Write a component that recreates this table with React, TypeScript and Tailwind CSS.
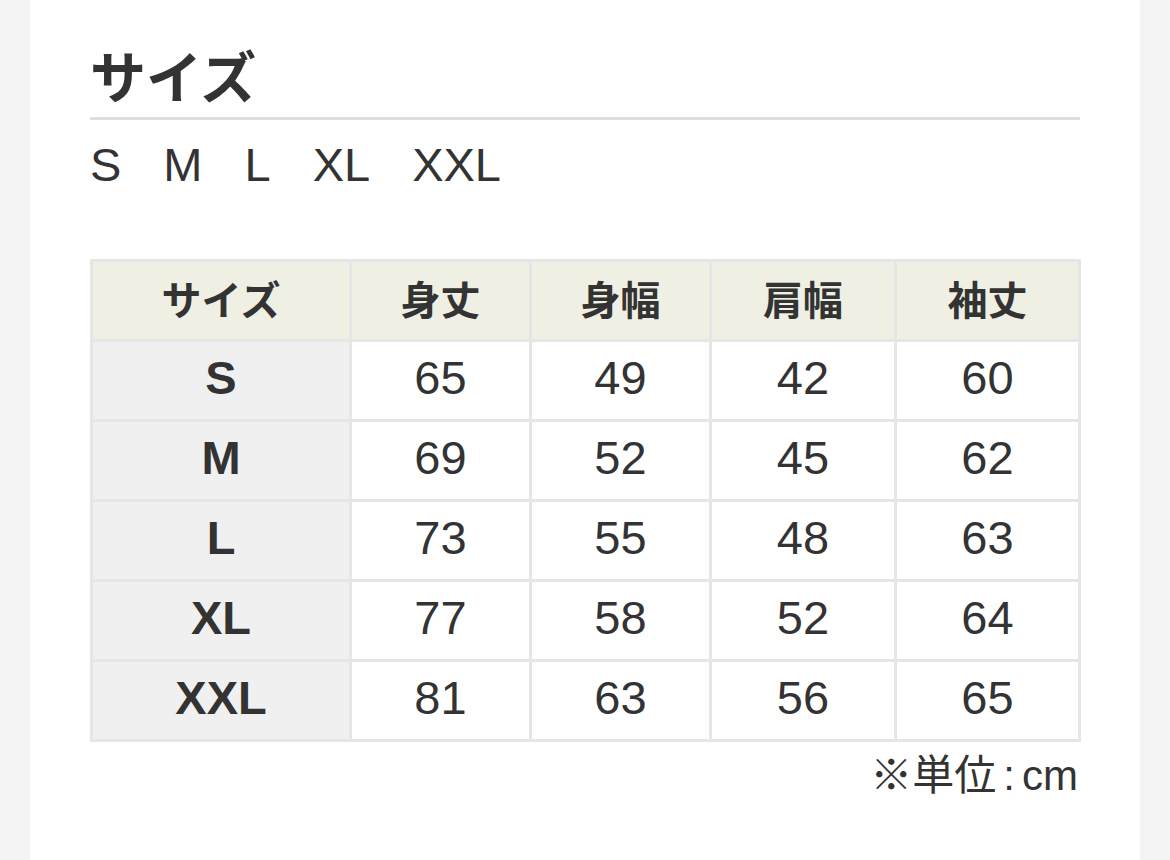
const rows = [
  ["S", "65", "49", "42", "60"],
  ["M", "69", "52", "45", "62"],
  ["L", "73", "55", "48", "63"],
  ["XL", "77", "58", "52", "64"],
  ["XXL", "81", "63", "56", "65"],
];

const heads = ["サイズ", "身丈", "身幅", "肩幅", "袖丈"];
const widths = ["w-[259px]", "w-[180px]", "w-[180px]", "w-[185px]", "w-[184px]"];

export default function App() {
  return (
    <div className="min-h-[860px] bg-[#f4f4f4] px-[30px] font-['Liberation_Sans','Noto_Sans_CJK_JP',sans-serif] text-[#333]">
      <div className="min-h-[860px] w-[1110px] bg-white px-[60px] pt-[44px]">
        <h2 className="border-b-[3px] border-[#dedede] pb-[3px] text-[56px] font-bold leading-[70px]">サイズ</h2>
        <div className="mt-[17px] flex gap-[42px] text-[47px] leading-[56px]">
          <span>S</span>
          <span>M</span>
          <span>L</span>
          <span>XL</span>
          <span>XXL</span>
        </div>
        <table className="mt-[66px] w-[988px] table-fixed border-collapse text-center">
          <thead>
            <tr className="h-[80px] bg-[#efefe3]">
              {heads.map((h, i) => (
                <th key={h} className={`${widths[i]} border-[3px] border-[#e6e6e6] text-[40px] font-bold`}>
                  {h}
                </th>
              ))}
            </tr>
          </thead>
          <tbody>
            {rows.map((r) => (
              <tr key={r[0]} className="h-[80px]">
                {r.map((c, i) =>
                  i === 0 ? (
                    <th key={i} className="border-[3px] border-[#e6e6e6] bg-[#f0f0f0] pb-[4px] text-[47px] font-bold">
                      {c}
                    </th>
                  ) : (
                    <td key={i} className="border-[3px] border-[#e6e6e6] pb-[4px] text-[47px]">
                      {c}
                    </td>
                  )
                )}
              </tr>
            ))}
          </tbody>
        </table>
        <p className="mt-[6px] w-[988px] text-right text-[42px] leading-[56px]">
          ※単位<span className="mx-[7px]">:</span>cm
        </p>
      </div>
    </div>
  );
}
